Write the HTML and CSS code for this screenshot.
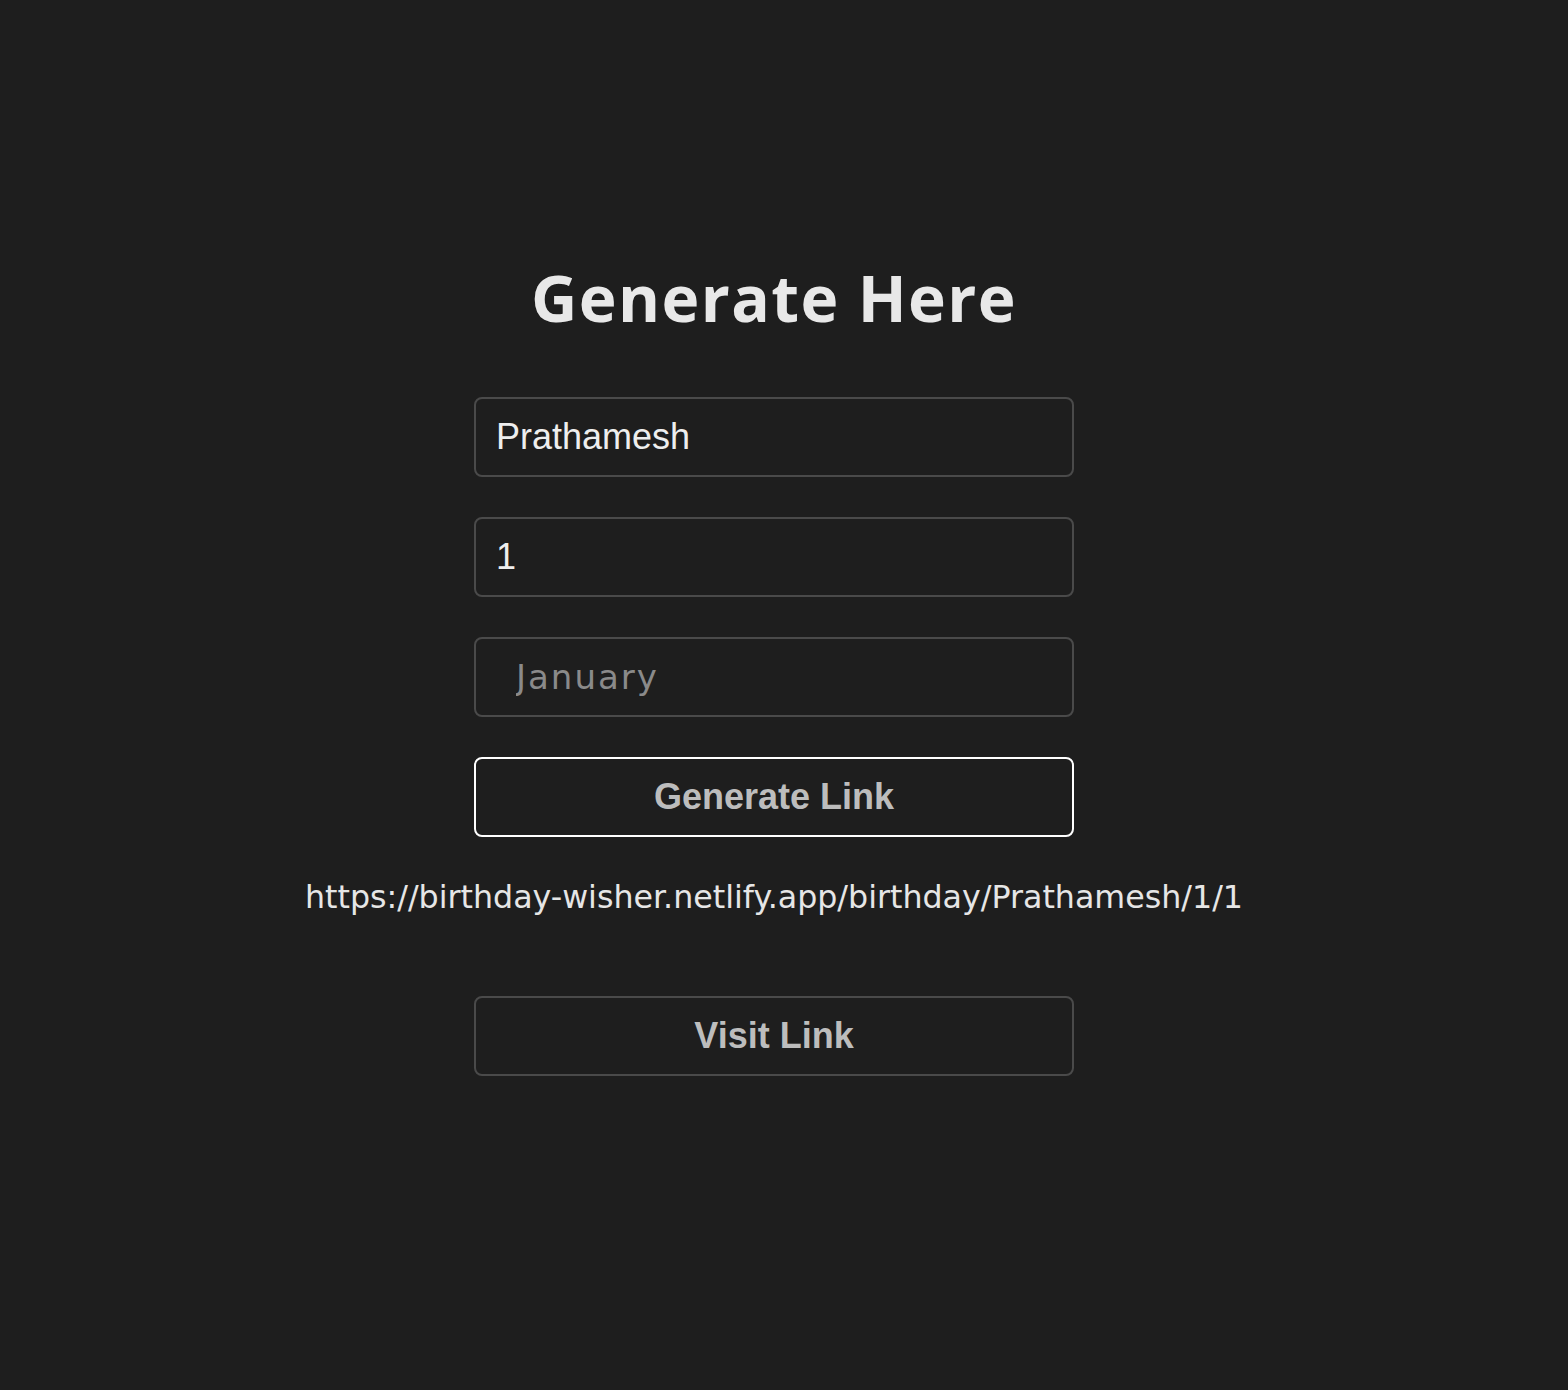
FILE: index.html
```html
<!DOCTYPE html>
<html lang="en">
<head>
<meta charset="utf-8">
<title>Generate Here</title>
<link rel="stylesheet" href="styles.css">
</head>
<body>
<main class="page">
  <h1 class="title">Generate Here</h1>
  <form class="form">
    <input class="field" type="text" value="Prathamesh">
    <input class="field" type="text" value="1">
    <select class="field select">
      <option>January</option>
    </select>
    <button type="button" class="btn btn-primary">Generate Link</button>
  </form>
  <p class="link">https://birthday-wisher.netlify.app/birthday/Prathamesh/1/1</p>
  <button type="button" class="btn btn-secondary">Visit Link</button>
</main>
</body>
</html>
```

FILE: styles.css
```css
html, body {
  margin: 0;
  padding: 0;
  background: #1e1e1e;
  min-height: 100%;
}

.page {
  display: flex;
  flex-direction: column;
  align-items: center;
  padding-top: 258px;
  padding-right: 20px;
  min-height: 1390px;
  box-sizing: border-box;
}

.title {
  margin: 0 0 59px 0;
  font-family: "Open Sans", sans-serif;
  font-weight: bold;
  font-size: 64px;
  line-height: 80px;
  height: 80px;
  color: #e8e8e8;
  letter-spacing: 1.4px;
}

.form {
  display: flex;
  flex-direction: column;
  gap: 40px;
  width: 600px;
}

.field {
  box-sizing: border-box;
  width: 600px;
  height: 80px;
  margin: 0;
  border: 2px solid #4a4a4a;
  border-radius: 8px;
  background: #1e1e1e;
  color: #eeeeee;
  font-family: "Liberation Sans", Arial, sans-serif;
  font-size: 36px;
  padding: 0 20px;
  outline: none;
}

.select {
  appearance: none;
  -webkit-appearance: none;
  font-family: "DejaVu Sans", sans-serif;
  font-size: 34px;
  color: #8a8a8a;
  padding-left: 40px;
  letter-spacing: 2px;
}

.btn {
  box-sizing: border-box;
  width: 600px;
  height: 80px;
  margin: 0;
  border-radius: 8px;
  background: #1e1e1e;
  color: #bdbdbd;
  font-family: "Liberation Sans", Arial, sans-serif;
  font-weight: bold;
  font-size: 36px;
  cursor: pointer;
}

.btn-primary {
  border: 2px solid #ffffff;
}

.btn-secondary {
  border: 2px solid #4a4a4a;
}

.link {
  margin: 40px 0 79px 0;
  height: 40px;
  line-height: 40px;
  font-family: "DejaVu Sans", sans-serif;
  font-size: 31.7px;
  color: #e6e6e6;
  white-space: nowrap;
}
```
